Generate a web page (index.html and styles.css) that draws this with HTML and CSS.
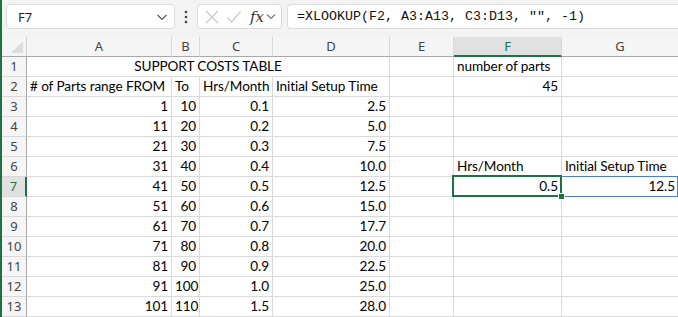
FILE: index.html
```html
<!DOCTYPE html>
<html lang="en">
<head>
  <meta charset="UTF-8" />
  <title>Support Costs - Excel</title>
  <link rel="stylesheet" href="styles.css">
</head>
<body>
  <div class="excel">
    <div class="formula-bar">
      <div class="name-box">
        <span>F7</span>
        <svg class="chev" width="12" height="8" viewBox="0 0 12 8"><path d="M1.5 2 L6 6.5 L10.5 2" fill="none" stroke="#555" stroke-width="1.2"/></svg>
      </div>
      <div class="more">
        <svg width="4" height="14" viewBox="0 0 4 14"><circle cx="2" cy="2" r="1.3" fill="#444"/><circle cx="2" cy="7" r="1.3" fill="#444"/><circle cx="2" cy="12" r="1.3" fill="#444"/></svg>
      </div>
      <div class="fx-box">
        <svg width="16" height="16" viewBox="0 0 16 16"><path d="M2 2 L14 14 M14 2 L2 14" stroke="#c8c8c8" stroke-width="1.2"/></svg>
        <svg width="16" height="16" viewBox="0 0 16 16"><path d="M1.5 8.5 L5.5 13 L14.5 2.5" fill="none" stroke="#c8c8c8" stroke-width="1.2"/></svg>
        <span class="fx">fx</span>
        <svg width="10" height="7" viewBox="0 0 10 7"><path d="M1 1.5 L5 5.5 L9 1.5" fill="none" stroke="#777" stroke-width="1.1"/></svg>
      </div>
      <div class="formula-input">=XLOOKUP(F2, A3:A13, C3:D13, "", -1)</div>
    </div>

    <div class="sheet">
      <div class="corner"><span class="tri"></span></div>
      <div class="col-head">A</div>
      <div class="col-head">B</div>
      <div class="col-head">C</div>
      <div class="col-head">D</div>
      <div class="col-head">E</div>
      <div class="col-head sel">F</div>
      <div class="col-head">G</div>

      <div class="row-head">1</div>
      <div class="cell title">SUPPORT COSTS TABLE</div>
      <div class="cell"></div>
      <div class="cell">number of parts</div>
      <div class="cell"></div>

      <div class="row-head">2</div>
      <div class="cell">&#35; of Parts range FROM</div>
      <div class="cell">To</div>
      <div class="cell">Hrs/Month</div>
      <div class="cell">Initial Setup Time</div>
      <div class="cell"></div>
      <div class="cell num">45</div>
      <div class="cell"></div>

      <div class="row-head">3</div>
      <div class="cell num">1</div><div class="cell num">10</div><div class="cell num">0.1</div><div class="cell num">2.5</div>
      <div class="cell"></div><div class="cell"></div><div class="cell"></div>

      <div class="row-head">4</div>
      <div class="cell num">11</div><div class="cell num">20</div><div class="cell num">0.2</div><div class="cell num">5.0</div>
      <div class="cell"></div><div class="cell"></div><div class="cell"></div>

      <div class="row-head">5</div>
      <div class="cell num">21</div><div class="cell num">30</div><div class="cell num">0.3</div><div class="cell num">7.5</div>
      <div class="cell"></div><div class="cell"></div><div class="cell"></div>

      <div class="row-head">6</div>
      <div class="cell num">31</div><div class="cell num">40</div><div class="cell num">0.4</div><div class="cell num">10.0</div>
      <div class="cell"></div><div class="cell">Hrs/Month</div><div class="cell">Initial Setup Time</div>

      <div class="row-head sel">7</div>
      <div class="cell num">41</div><div class="cell num">50</div><div class="cell num">0.5</div><div class="cell num">12.5</div>
      <div class="cell"></div><div class="cell num active">0.5</div><div class="cell num spill">12.5</div>

      <div class="row-head">8</div>
      <div class="cell num">51</div><div class="cell num">60</div><div class="cell num">0.6</div><div class="cell num">15.0</div>
      <div class="cell"></div><div class="cell"></div><div class="cell"></div>

      <div class="row-head">9</div>
      <div class="cell num">61</div><div class="cell num">70</div><div class="cell num">0.7</div><div class="cell num">17.7</div>
      <div class="cell"></div><div class="cell"></div><div class="cell"></div>

      <div class="row-head">10</div>
      <div class="cell num">71</div><div class="cell num">80</div><div class="cell num">0.8</div><div class="cell num">20.0</div>
      <div class="cell"></div><div class="cell"></div><div class="cell"></div>

      <div class="row-head">11</div>
      <div class="cell num">81</div><div class="cell num">90</div><div class="cell num">0.9</div><div class="cell num">22.5</div>
      <div class="cell"></div><div class="cell"></div><div class="cell"></div>

      <div class="row-head">12</div>
      <div class="cell num">91</div><div class="cell num">100</div><div class="cell num">1.0</div><div class="cell num">25.0</div>
      <div class="cell"></div><div class="cell"></div><div class="cell"></div>

      <div class="row-head">13</div>
      <div class="cell num">101</div><div class="cell num">110</div><div class="cell num">1.5</div><div class="cell num">28.0</div>
      <div class="cell"></div><div class="cell"></div><div class="cell"></div>
    </div>
  </div>
</body>
</html>
```

FILE: styles.css
```css
body {
  margin: 0;
  background: #fff;
  overflow: hidden;
}
.excel {
  width: 678px;
  height: 317px;
  border-left: 2px solid #1e7145;
  box-sizing: border-box;
  overflow: hidden;
}
.formula-bar {
  height: 37px;
  background: #f3f3f3;
  display: flex;
  align-items: flex-start;
  padding-top: 4px;
  padding-left: 4px;
  box-sizing: border-box;
}
.name-box {
  width: 169px;
  height: 25px;
  background: #fff;
  border: 1px solid #dcdcdc;
  border-radius: 4px;
  box-sizing: border-box;
  display: flex;
  align-items: center;
  justify-content: space-between;
  padding: 0 6px 0 11px;
  font-family: "Noto Sans", sans-serif;
  font-size: 13px;
  color: #222;
}
.more {
  width: 22px;
  height: 25px;
  display: flex;
  align-items: center;
  justify-content: center;
}
.fx-box {
  width: 85px;
  height: 25px;
  background: #fff;
  border: 1px solid #dcdcdc;
  border-radius: 4px;
  box-sizing: border-box;
  display: flex;
  align-items: center;
  gap: 6px;
  padding-left: 6px;
}
.fx {
  font-family: "DejaVu Serif", serif;
  font-style: italic;
  font-size: 15px;
  color: #333;
  margin-left: 2px;
  margin-right: -4px;
}
.formula-input {
  flex: 1;
  height: 25px;
  margin-left: 5px;
  background: #fff;
  border: 1px solid #dcdcdc;
  border-right: none;
  border-radius: 4px 0 0 4px;
  box-sizing: border-box;
  padding-left: 9px;
  font-family: "Liberation Mono", monospace;
  font-size: 13.33px;
  line-height: 23px;
  color: #111;
  white-space: nowrap;
}
.sheet {
  display: grid;
  grid-template-columns: 25px 145px 28px 73px 117px 64px 108px 117px;
  grid-auto-rows: 20px;
  font-family: Lato, sans-serif;
  font-size: 13.6px;
  letter-spacing: -0.1px;
  color: #000;
}
.corner {
  background: #f5f5f5;
  border-right: 1px solid #cfcfcf;
  border-bottom: 1px solid #a8a8a8;
  box-sizing: border-box;
  position: relative;
}
.tri {
  position: absolute;
  right: 3px;
  bottom: 3px;
  width: 0;
  height: 0;
  border-left: 12px solid transparent;
  border-bottom: 12px solid #dcdcdc;
}
.col-head {
  background: #f5f5f5;
  border-right: 1px solid #d8d8d8;
  border-bottom: 1px solid #a8a8a8;
  box-sizing: border-box;
  text-align: center;
  font-family: "Noto Sans", sans-serif;
  font-size: 13px;
  letter-spacing: 0;
  line-height: 19px;
  color: #444;
}
.col-head.sel {
  background: #e1e1e1;
  border-bottom: 2px solid #1e7145;
  color: #1e7145;
}
.row-head {
  background: #f5f5f5;
  border-right: 1px solid #a8a8a8;
  border-bottom: 1px solid #d8d8d8;
  box-sizing: border-box;
  text-align: center;
  font-family: "Noto Sans", sans-serif;
  font-size: 13px;
  letter-spacing: 0;
  line-height: 19px;
  color: #444;
}
.row-head.sel {
  background: #e1e1e1;
  border-right: 2px solid #1e7145;
  color: #1e7145;
}
.cell {
  border-right: 1px solid #dadada;
  border-bottom: 1px solid #dadada;
  box-sizing: border-box;
  padding: 0 3px;
  line-height: 19px;
  white-space: nowrap;
}
.num {
  text-align: right;
}
.title {
  grid-column: span 4;
  text-align: center;
}
.active {
  position: relative;
}
.active::after {
  content: "";
  position: absolute;
  left: -2px;
  top: -2px;
  right: -1px;
  bottom: -1px;
  border: 2px solid #1e7145;
}
.active::before {
  content: "";
  position: absolute;
  right: -4px;
  bottom: -4px;
  width: 5px;
  height: 5px;
  background: #1e7145;
  border: 1px solid #fff;
  z-index: 2;
}
.spill {
  position: relative;
}
.spill::after {
  content: "";
  position: absolute;
  left: -1px;
  top: -1px;
  right: 0;
  bottom: -1px;
  border: 1px solid #4a7fd0;
  border-left: none;
}
```
